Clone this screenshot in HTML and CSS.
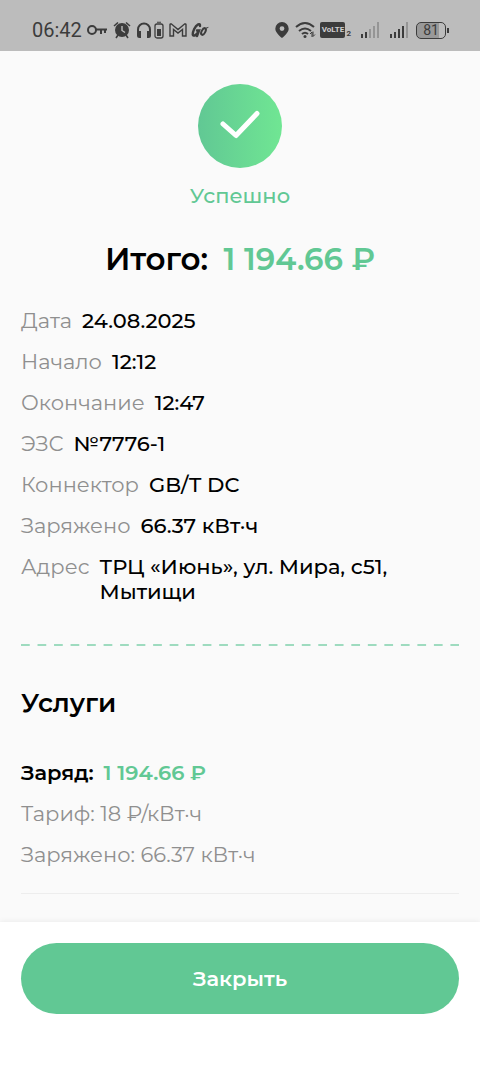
FILE: index.html
```html
<!DOCTYPE html>
<html lang="ru">
<head>
<meta charset="utf-8">
<meta name="viewport" content="width=device-width, initial-scale=1">
<title>Чек</title>
<link rel="stylesheet" href="styles.css">
</head>
<body>
<div class="screen">
  <header class="status">
    <div class="status-group">
      <time class="clock">06:42</time>
      <svg class="key" width="21" height="20" viewBox="0 0 21 20" fill="none" stroke="currentColor" stroke-width="2"><circle cx="5" cy="10" r="4"/><path d="M9 9.500h11M14 10v4M18 10v3"/></svg>
      <svg width="18" height="20" viewBox="0 0 18 20"><circle cx="9" cy="10" r="7" fill="currentColor"/><path d="M1 6 5 2.500M17 6 13 2.500M5 15l-2 3M13 15l2 3" stroke="currentColor" stroke-width="1.600"/><path d="M9 6v4.500l3 2" stroke="#bcbcbc" stroke-width="1.400" fill="none"/></svg>
      <svg class="headphones" width="16" height="20" viewBox="0 0 16 20"><path d="M2 13V9.500a6 6 0 0 1 12 0V13" fill="none" stroke="currentColor" stroke-width="2"/><path d="M1 11h4v7H3.500A2.500 2.500 0 0 1 1 15.500zM15 11h-4v7h1.500a2.500 2.500 0 0 0 2.500-2.500z" fill="currentColor"/></svg>
      <svg class="cell" width="10" height="20" viewBox="0 0 10 20"><rect x="1" y="4" width="8" height="14" rx="2" fill="none" stroke="currentColor" stroke-width="1.300"/><path d="M3 1.800h4v1H3zM3 9h4v7H3z" fill="currentColor"/></svg>
      <svg class="mail" width="18" height="20" viewBox="0 0 18 20"><path d="M1 4.500Q1 3.500 2.500 4L9 9.500 15.500 4Q17 3.500 17 4.500V16h-3.500V9.500L9 13 4.500 9.500V16H1z" fill="none" stroke="currentColor" stroke-width="1.400"/></svg>
      <svg class="go" width="18" height="20" viewBox="0 0 18 20" fill="none" stroke="currentColor" stroke-linecap="round"><path d="M9 6C9.500 2.500 5.500 4 3.200 9s-1.700 7 .300 6.500S7 12.500 8 10.500H6M8 10.500 6 16" stroke-width="2.400"/><ellipse cx="12.500" cy="11.500" rx="1.800" ry="3.600" transform="rotate(28 12.500 11.500)" stroke-width="2"/><path d="m14 8.500 3-1"/></svg>
    </div>
    <div class="status-group">
      <svg class="pin" width="16" height="20" viewBox="0 0 16 20"><path fill="currentColor" fill-rule="evenodd" d="M8 2a6.700 6.700 0 0 0-6.700 6.700C1.300 13 8 18 8 18s6.700-5 6.700-9.300A6.700 6.700 0 0 0 8 2m0 4.200a2.400 2.400 0 1 1 0 4.800 2.400 2.400 0 0 1 0-4.800"/></svg>
      <svg class="wifi" width="21" height="20" viewBox="0 0 21 20"><path d="M1 7q9-8 18 0M4 11q6-5 12 0M7 14q3-2.500 6 0" fill="none" stroke="currentColor" stroke-width="2"/><circle cx="10" cy="16.500" r="1.500" fill="currentColor"/><path d="m15 14 2-2v5M20 14.500l-2 2v-5" fill="none" stroke="currentColor"/></svg>
      <span class="volte">VoLTE</span><span class="sim">2</span>
      <svg class="signal" width="20" height="20" viewBox="0 0 20 20" fill="currentColor"><path d="M1 14h2v4H1zM5 12h2v6H5z"/><path opacity=".3" d="M9 9h2v9H9zM13 6h2v12h-2zM17 2h2v16h-2z"/></svg>
      <svg class="signal" width="20" height="20" viewBox="0 0 20 20" fill="currentColor"><path d="M1 14h2v4H1zM5 12h2v6H5zM9 9h2v9H9zM13 6h2v12h-2z"/><path opacity=".3" d="M17 2h2v16h-2z"/></svg>
      <span class="battery">81</span><span class="battery-tip"></span>
    </div>
  </header>

  <main class="receipt">
    <section class="result">
      <svg class="check" width="84" height="84" viewBox="0 0 84 84">
        <defs><linearGradient id="g"><stop stop-color="#61c894"/><stop offset="1" stop-color="#70e693"/></linearGradient></defs>
        <circle cx="42" cy="42" r="42" fill="url(#g)"/>
        <path d="M25 40 38 51.500 59 29.500" fill="none" stroke="#fff" stroke-width="5" stroke-linecap="round" stroke-linejoin="round"/>
      </svg>
      <p class="success">Успешно</p>
      <h1 class="total">Итого: <span class="amount">1 194.66 ₽</span></h1>
    </section>
    <dl class="details">
      <div class="row"><dt>Дата</dt><dd>24.08.2025</dd></div>
      <div class="row"><dt>Начало</dt><dd>12:12</dd></div>
      <div class="row"><dt>Окончание</dt><dd>12:47</dd></div>
      <div class="row"><dt>ЭЗС</dt><dd>№7776-1</dd></div>
      <div class="row"><dt>Коннектор</dt><dd>GB/T DC</dd></div>
      <div class="row"><dt>Заряжено</dt><dd>66.37 кВт·ч</dd></div>
      <div class="row"><dt>Адрес</dt><dd>ТРЦ «Июнь», ул. Мира, с51, Мытищи</dd></div>
    </dl>
    <hr class="dashes">
    <section class="services">
      <h2 class="heading">Услуги</h2>
      <h3 class="service">Заряд: <span class="amount">1 194.66 ₽</span></h3>
      <p class="note">Тариф: 18 ₽/кВт·ч</p>
      <p class="note">Заряжено: 66.37 кВт·ч</p>
    </section>
  </main>
  <footer class="footer"><button class="close" type="button">Закрыть</button></footer>
</div>
</body>
</html>
```
FILE: styles.css
```css
* { box-sizing: border-box; margin: 0; padding: 0; }
body {
  font-family: Montserrat, Inter, sans-serif;
  font-size: 21px;
  line-height: 25px;
  color: #000;
  background: #fafafa;
}
.screen { min-height: 100vh; display: flex; flex-direction: column; }
.status {
  display: flex;
  justify-content: space-between;
  align-items: center;
  padding: 9px 31px 0 32px;
  height: 51px;
  background: #bcbcbc;
  color: #3c3c3c;
}
.status-group { display: flex; align-items: center; }
.clock { font: 20px/24px Roboto, sans-serif; margin-right: 5px; }
.key { margin-right: 5px; }
.headphones { margin-left: 5px; }
.cell { margin-left: 2px; }
.mail { margin-left: 5px; }
.go { margin-left: 4px; }
.wifi { margin-left: 5px; }
.volte {
  margin-left: 4px;
  width: 25px;
  border-radius: 2px;
  background: #3c3c3c;
  color: #d0d0d0;
  font: bold 8px/16px Roboto, sans-serif;
  text-align: center;
}
.sim { font: bold 8px/8px Roboto, sans-serif; margin: 8px 0 0 1px; }
.signal { margin-left: 9px; }
.battery {
  width: 30px;
  margin-left: 7px;
  border: 1px solid #3c3c3c;
  border-radius: 5px;
  background: linear-gradient(90deg, #999 80%, #bcbcbc 80%);
  font: 14px/15px Roboto, sans-serif;
  text-align: center;
}
.battery-tip { width: 2px; height: 5px; margin-left: 1px; background: #3c3c3c; }
.receipt { flex: 1; padding: 33px 21px 28px; }
.result { text-align: center; }
.check { display: block; margin: 0 auto 15px; }
.success { color: #61c894; font-weight: 500; }
.total { margin-top: 31px; font-size: 31px; line-height: 40px; font-weight: 600; }
.amount { color: #61c894; margin-left: 4px; }
.total .amount { margin-left: 7px; }
.details { display: grid; gap: 16px; margin-top: 29px; }
.row { display: flex; gap: 10px; }
.row dt { color: #8f8f8f; }
.row dd { font-weight: 500; }
.dashes {
  height: 2px;
  margin-top: 40px;
  border: 0;
  background: linear-gradient(90deg, #9edbbf 50%, transparent 50%) 0 0 / calc(200% / 53) 2px;
}
.services { display: grid; gap: 16px; margin-top: 41px; padding-bottom: 26px; border-bottom: 1px solid #ededed; }
.heading { font-size: 26px; line-height: 32px; font-weight: 600; margin-bottom: 25px; }
.service { font-size: 21px; font-weight: 600; }
.note { color: #8f8f8f; }
.footer { padding: 21px 21px 53px; background: #fff; box-shadow: 0 0 6px rgba(0, 0, 0, .08); }
.close {
  display: block;
  width: 100%;
  height: 71px;
  border: 0;
  border-radius: 36px;
  background: #61c894;
  color: #fff;
  font: 600 21px/25px Montserrat, Inter, sans-serif;
}
```
